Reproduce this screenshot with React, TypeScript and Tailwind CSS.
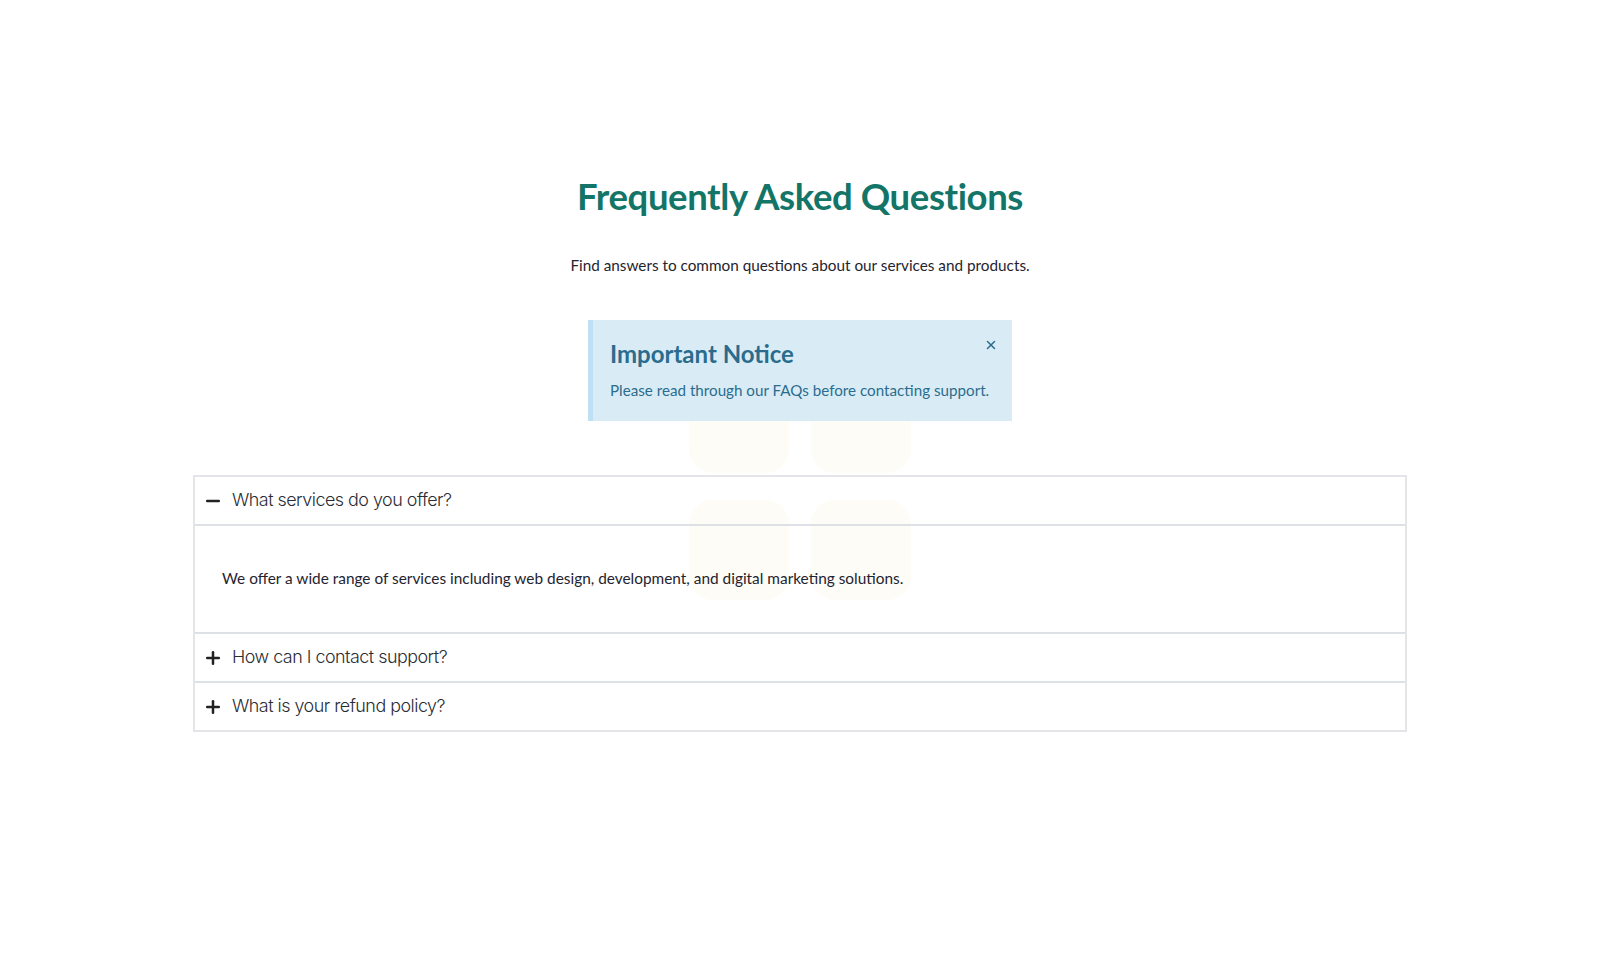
import { Minus, Plus, X } from "lucide-react";
import { useState } from "react";

const faqs = [
  {
    q: "What services do you offer?",
    a: "We offer a wide range of services including web design, development, and digital marketing solutions.",
  },
  {
    q: "How can I contact support?",
    a: "You can reach our support team via email or through the contact form on our website.",
  },
  {
    q: "What is your refund policy?",
    a: "We offer a full refund within 30 days of purchase if you are not satisfied.",
  },
];

export default function App() {
  const [open, setOpen] = useState<number | null>(0);
  const [showNotice, setShowNotice] = useState(true);

  return (
    <div
      className="min-h-screen w-full bg-white pt-[174px]"
      style={{ fontFamily: "Lato, 'Noto Sans', sans-serif" }}
    >
      {/* Heading */}
      <div className="flex flex-col items-center">
        <h1 className="text-[36.5px] leading-[44px] font-bold text-[#137567] tracking-[-0.4px]">
          Frequently Asked Questions
        </h1>
        <p className="mt-[35px] text-[15.3px] leading-6 text-[#1f2430]">
          Find answers to common questions about our services and products.
        </p>
      </div>

      <div className="relative mt-[43px]">
        {/* Background decorative squares */}
        <div className="absolute left-1/2 top-[53px] -translate-x-1/2 grid grid-cols-2 gap-x-[22px] gap-y-[27px] pointer-events-none">
          <div className="w-[100px] h-[100px] rounded-3xl bg-[#fdfcf6]" />
          <div className="w-[100px] h-[100px] rounded-3xl bg-[#fdfcf6]" />
          <div className="w-[100px] h-[100px] rounded-3xl bg-[#fdfcf6]" />
          <div className="w-[100px] h-[100px] rounded-3xl bg-[#fdfcf6]" />
        </div>

        {/* Notice */}
        <div className="relative z-10 flex justify-center h-[101px]">
          {showNotice && (
            <div className="relative w-[424px] bg-[#d9ecf6] border-l-[5px] border-[#bfe0f4] pl-[17px] pr-2 pt-[18px] pb-5">
              <h2 className="text-[24px] leading-8 font-bold text-[#2b6c8e]">Important Notice</h2>
              <p className="mt-[9px] whitespace-nowrap text-[15.2px] leading-[22px] text-[#2b6c8e]">
                Please read through our FAQs before contacting support.
              </p>
              <button
                onClick={() => setShowNotice(false)}
                className="absolute right-[14px] top-[18px] text-[#2b6c8e]"
              >
                <X className="w-[14px] h-[14px]" strokeWidth={2.5} />
              </button>
            </div>
          )}
        </div>

        {/* Accordion */}
        <div className="relative z-10 mx-auto mt-[54px] w-[1214px] border-2 border-[#e3e5e8]">
          {faqs.map((f, i) => (
            <div key={i} className={i > 0 ? "border-t-2 border-[#dde1e6]" : ""}>
              <button
                onClick={() => setOpen(open === i ? null : i)}
                className="flex w-full items-center h-[47px] pl-[8px] text-left"
              >
                {open === i ? (
                  <Minus className="w-5 h-5 text-[#222]" strokeWidth={3} />
                ) : (
                  <Plus className="w-5 h-5 text-[#222]" strokeWidth={3} />
                )}
                <span
                  className="ml-[9px] text-[17.9px] font-light text-[#2a2d33] tracking-[-0.5px]"
                  style={{ fontFamily: "Inter, sans-serif" }}
                >
                  {f.q}
                </span>
              </button>
              {open === i && (
                <div className="border-t-2 border-[#dde1e6] h-[108px] flex items-center px-[27px]">
                  <p className="text-[15.4px] text-[#1f2430]">{f.a}</p>
                </div>
              )}
            </div>
          ))}
        </div>
      </div>
    </div>
  );
}
